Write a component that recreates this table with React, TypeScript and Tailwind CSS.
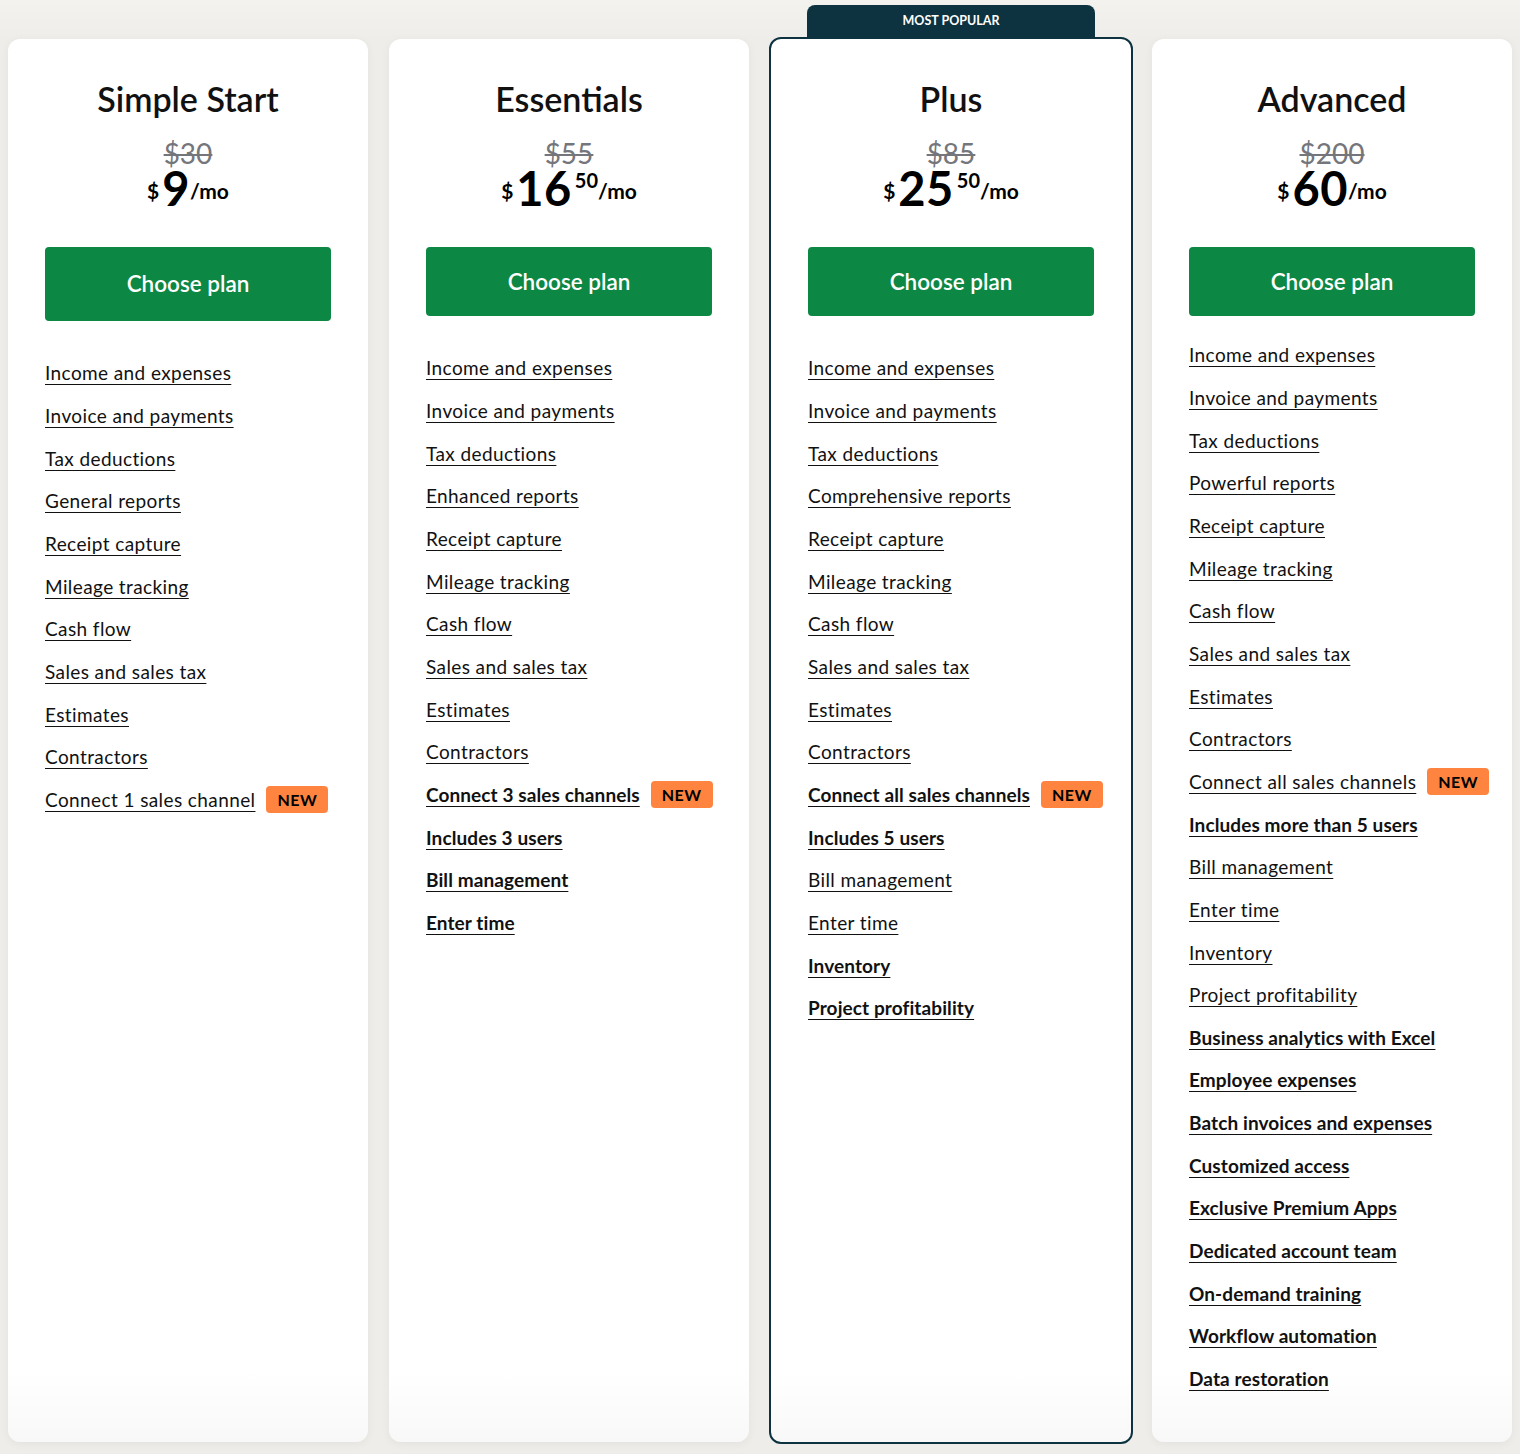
type Feature = { label: string; bold?: boolean; isNew?: boolean };

type Plan = {
  name: string;
  oldPrice: string;
  whole: string;
  cents?: string;
  popular?: boolean;
  wrapClass: string;
  btnClass: string;
  listClass: string;
  features: Feature[];
};

const base = ["Income and expenses", "Invoice and payments", "Tax deductions"];
const mid = ["Receipt capture", "Mileage tracking", "Cash flow", "Sales and sales tax", "Estimates", "Contractors"];

const plans: Plan[] = [
  {
    name: "Simple Start",
    oldPrice: "$30",
    whole: "9",
    wrapClass: "",
    btnClass: "h-[74px]",
    listClass: "mt-[31px]",
    features: [
      ...base.map((label) => ({ label })),
      { label: "General reports" },
      ...mid.map((label) => ({ label })),
      { label: "Connect 1 sales channel", isNew: true },
    ],
  },
  {
    name: "Essentials",
    oldPrice: "$55",
    whole: "16",
    cents: "50",
    wrapClass: "ml-[21px]",
    btnClass: "h-[69px]",
    listClass: "mt-[31px]",
    features: [
      ...base.map((label) => ({ label })),
      { label: "Enhanced reports" },
      ...mid.map((label) => ({ label })),
      { label: "Connect 3 sales channels", bold: true, isNew: true },
      { label: "Includes 3 users", bold: true },
      { label: "Bill management", bold: true },
      { label: "Enter time", bold: true },
    ],
  },
  {
    name: "Plus",
    oldPrice: "$85",
    whole: "25",
    cents: "50",
    popular: true,
    wrapClass: "ml-[20px]",
    btnClass: "h-[69px]",
    listClass: "mt-[31px]",
    features: [
      ...base.map((label) => ({ label })),
      { label: "Comprehensive reports" },
      ...mid.map((label) => ({ label })),
      { label: "Connect all sales channels", bold: true, isNew: true },
      { label: "Includes 5 users", bold: true },
      { label: "Bill management" },
      { label: "Enter time" },
      { label: "Inventory", bold: true },
      { label: "Project profitability", bold: true },
    ],
  },
  {
    name: "Advanced",
    oldPrice: "$200",
    whole: "60",
    wrapClass: "ml-[19px]",
    btnClass: "h-[69px]",
    listClass: "mt-[18px]",
    features: [
      ...base.map((label) => ({ label })),
      { label: "Powerful reports" },
      ...mid.map((label) => ({ label })),
      { label: "Connect all sales channels", isNew: true },
      { label: "Includes more than 5 users", bold: true },
      { label: "Bill management" },
      { label: "Enter time" },
      { label: "Inventory" },
      { label: "Project profitability" },
      { label: "Business analytics with Excel", bold: true },
      { label: "Employee expenses", bold: true },
      { label: "Batch invoices and expenses", bold: true },
      { label: "Customized access", bold: true },
      { label: "Exclusive Premium Apps", bold: true },
      { label: "Dedicated account team", bold: true },
      { label: "On-demand training", bold: true },
      { label: "Workflow automation", bold: true },
      { label: "Data restoration", bold: true },
    ],
  },
];

function PlanCard({ plan }: { plan: Plan }) {
  return (
    <div
      className={`${
        plan.popular
          ? "relative -my-[2px] flex w-[364px] flex-col rounded-[12px] border-2 border-[#0d3341] bg-[linear-gradient(to_bottom,#fff_95%,#f8f8f8)] px-[37px]"
          : "relative flex w-[360px] flex-col rounded-[12px] bg-[linear-gradient(to_bottom,#fff_95%,#f8f8f8)] px-[37px] shadow-[0_2px_10px_rgba(0,0,0,0.05)]"
      } ${plan.wrapClass}`}
    >
      {plan.popular && (
        <div className="absolute -top-[34px] left-[36px] flex h-[33px] w-[288px] items-center justify-center rounded-t-[8px] bg-[#0d3341] text-[12.5px] font-bold text-white">
          MOST POPULAR
        </div>
      )}
      <h2 className="pt-10 text-center text-[34px] font-semibold leading-[40px] text-[#111]">
        {plan.name}
      </h2>
      <p className="mt-[18px] text-center text-[28px] leading-[32px] text-[#75767b] line-through decoration-[2px]">
        {plan.oldPrice}
      </p>
      <div className="flex h-[40px] items-baseline justify-center font-bold text-black">
        <span className="relative -top-[8px] mr-[3px] text-[21px]">$</span>
        <span className="relative -top-[1px] text-[47px] leading-[40px] tracking-[0.5px]">{plan.whole}</span>
        {plan.cents && (
          <span className="relative -top-[19px] ml-[3px] text-[20px] leading-none">{plan.cents}</span>
        )}
        <span className="relative -top-[8px] text-[21px]">/mo</span>
      </div>
      <button
        className={`mt-[38px] flex w-full items-center justify-center rounded-[4px] bg-[#0d8744] text-[22.5px] font-semibold text-white ${plan.btnClass}`}
      >
        Choose plan
      </button>
      <ul className={`flex flex-col ${plan.listClass}`}>
        {plan.features.map((f) => (
          <li key={f.label} className="flex h-[42.67px] items-center whitespace-nowrap">
            <span
              className={`text-[19px] leading-[24px] text-[#111] underline decoration-1 underline-offset-[4px] ${
                f.bold ? "font-bold tracking-[0.1px]" : "font-normal tracking-[0.4px]"
              }`}
            >
              {f.label}
            </span>
            {f.isNew && (
              <span className="ml-[11px] shrink-0 rounded-[4px] bg-[#ff8440] px-[11px] py-[2px] text-[16px] font-bold leading-[23px] tracking-[0.5px] text-black">
                NEW
              </span>
            )}
          </li>
        ))}
      </ul>
    </div>
  );
}

export default function App() {
  return (
    <main
      className="flex min-h-[1454px] w-full bg-[linear-gradient(to_bottom,#f3f2ef,#eeede9_40px,#eeede9)] px-2 pb-[12px] pt-[39px]"
      style={{ fontFamily: "Lato, 'Open Sans', sans-serif" }}
    >
      {plans.map((p) => (
        <PlanCard key={p.name} plan={p} />
      ))}
    </main>
  );
}
